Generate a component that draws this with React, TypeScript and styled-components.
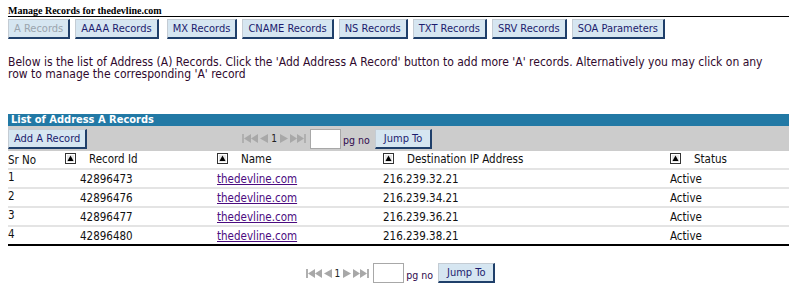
import React from "react";
import styled, { createGlobalStyle } from "styled-components";

const Global = createGlobalStyle`
  html, body { margin: 0; padding: 0; background: #ffffff; }
  body { padding: 8px; font-family: "DejaVu Sans Condensed", "DejaVu Sans", sans-serif; font-stretch: condensed; }
`;

const Page = styled.div`
  width: 781px;
`;

const Title = styled.div`
  font-family: "Liberation Serif", serif;
  font-weight: bold;
  font-size: 10px;
  line-height: 6px;
  height: 8px;
  color: #000;
  border-bottom: 1px solid #000;
`;

const TabBar = styled.div`
  display: flex;
  gap: 5px;
  margin-top: 2px;
`;

const Btn = styled.button<{ $disabled?: boolean; $pad?: number; $shift?: number }>`
  font-family: "DejaVu Sans Condensed", "DejaVu Sans", sans-serif;
  font-stretch: condensed;
  font-size: 11px;
  height: 20px;
  padding: 0 ${(p) => p.$pad ?? 5}px;
  margin: 0 0 0 ${(p) => p.$shift ?? 0}px;
  background: #d6e6f1;
  color: ${(p) => (p.$disabled ? "#9aa4ad" : "#1c1c6e")};
  border-style: solid;
  border-width: 1px 2px 2px 1px;
  border-color: #c4ccd4 #1f3f6a #1f3f6a #c4ccd4;
  cursor: pointer;
  white-space: nowrap;
`;

const Intro = styled.p`
  margin: 17px 12px 0 0;
  font-size: 12px;
  line-height: 12px;
  color: #300a2e;
`;

const ListHead = styled.div`
  margin-top: 34px;
  background: #2279a5;
  color: #fff;
  font-weight: bold;
  font-size: 11px;
  line-height: 12px;
  padding: 0 3px;
`;

const Toolbar = styled.div`
  background: #cccccc;
  height: 25px;
  display: flex;
  align-items: center;
`;

const PagerWrap = styled.div<{ $left: number }>`
  display: flex;
  align-items: center;
  margin-left: ${(p) => p.$left}px;
`;

const Arrows = styled.div`
  display: flex;
  align-items: center;
  gap: 1px;
  font-size: 10px;
  color: #222;
`;

const PageNum = styled.span`
  margin: 0 2px;
`;

const PageInput = styled.input`
  width: 31px;
  height: 20px;
  box-sizing: border-box;
  border: 1px solid #a8a8a8;
  background: #fff;
  margin: 0 2px 0 4px;
  padding: 0;
`;

const PgNo = styled.span`
  font-size: 10.5px;
  color: #300a4e;
  margin: 3px 5px 0 0;
`;

const Table = styled.table`
  width: 100%;
  border-collapse: collapse;
  border-bottom: 2px solid #000;
`;

const Th = styled.th<{ $w?: number }>`
  text-align: left;
  font-weight: normal;
  font-size: 11.5px;
  color: #111;
  height: 17px;
  padding: 0;
  border-bottom: 2px solid #e4e4e4;
  width: ${(p) => (p.$w ? `${p.$w}px` : "auto")};
  vertical-align: middle;
`;

const HeadInner = styled.span`
  display: inline-flex;
  align-items: center;
  gap: 13px;
`;

const Td = styled.td<{ $pad?: number; $up?: boolean }>`
  font-size: 11.5px;
  color: #111;
  height: 17px;
  padding: 0 0 0 ${(p) => p.$pad ?? 0}px;
  border-bottom: 2px solid #e4e4e4;
  vertical-align: ${(p) => (p.$up ? "top" : "middle")};
  line-height: 14px;
`;

const Row = styled.tr`
  &:last-child td { border-bottom: none; }
`;

const Link = styled.a`
  color: #4b0c7f;
  text-decoration: underline;
`;

const BottomPager = styled.div`
  display: flex;
  justify-content: center;
  align-items: center;
  margin-top: 17px;
  padding-left: 4px;
`;

const SortIcon = () => (
  <svg width="11" height="11" viewBox="0 0 11 11">
    <rect x="0.5" y="0.5" width="10" height="10" fill="#d4d4d4" stroke="#333" />
    <rect x="1.5" y="1.5" width="8" height="8" fill="#e8e8e8" stroke="#fff" strokeWidth="1" />
    <path d="M5.5 2.5 L8.5 8 L2.5 8 Z" fill="#000" />
  </svg>
);

const First = () => (
  <svg width="16" height="9" viewBox="0 0 16 9">
    <rect x="0" y="0" width="2" height="9" fill="#b0b0b0" />
    <path d="M9 0 L2 4.5 L9 9 Z" fill="#a8a8a8" />
    <path d="M16 0 L9 4.5 L16 9 Z" fill="#a8a8a8" />
  </svg>
);
const Prev = () => (
  <svg width="9" height="9" viewBox="0 0 9 9">
    <path d="M9 0 L1 4.5 L9 9 Z" fill="#a8a8a8" />
  </svg>
);
const Next = () => (
  <svg width="9" height="9" viewBox="0 0 9 9">
    <path d="M0 0 L8 4.5 L0 9 Z" fill="#a8a8a8" />
  </svg>
);
const Last = () => (
  <svg width="16" height="9" viewBox="0 0 16 9">
    <path d="M0 0 L7 4.5 L0 9 Z" fill="#a8a8a8" />
    <path d="M7 0 L14 4.5 L7 9 Z" fill="#a8a8a8" />
    <rect x="14" y="0" width="2" height="9" fill="#b0b0b0" />
  </svg>
);

const Pager = () => (
  <>
    <Arrows>
      <First />
      <Prev />
      <PageNum>1</PageNum>
      <Next />
      <Last />
    </Arrows>
    <PageInput />
    <PgNo>pg no</PgNo>
    <Btn $pad={8}>Jump To</Btn>
  </>
);

const tabs = [
  "A Records",
  "AAAA Records",
  "MX Records",
  "CNAME Records",
  "NS Records",
  "TXT Records",
  "SRV Records",
  "SOA Parameters",
];

const rows = [
  ["1", "42896473", "216.239.32.21"],
  ["2", "42896476", "216.239.34.21"],
  ["3", "42896477", "216.239.36.21"],
  ["4", "42896480", "216.239.38.21"],
];

export default function App() {
  return (
    <Page>
      <Global />
      <Title>Manage Records for thedevline.com</Title>
      <TabBar>
        {tabs.map((t, i) => (
          <Btn key={t} $disabled={i === 0} $shift={i === 2 ? 3 : 0}>
            {t}
          </Btn>
        ))}
      </TabBar>
      <Intro>
        Below is the list of Address (A) Records. Click the 'Add Address A Record' button to add
        more 'A' records. Alternatively you may click on any row to manage the corresponding 'A'
        record
      </Intro>
      <ListHead>List of Address A Records</ListHead>
      <Toolbar>
        <Btn>Add A Record</Btn>
        <PagerWrap $left={155}>
          <Pager />
        </PagerWrap>
      </Toolbar>
      <Table>
        <thead>
          <tr>
            <Th $w={57}>Sr No</Th>
            <Th $w={152}>
              <HeadInner>
                <SortIcon />
                Record Id
              </HeadInner>
            </Th>
            <Th $w={166}>
              <HeadInner>
                <SortIcon />
                Name
              </HeadInner>
            </Th>
            <Th $w={287}>
              <HeadInner>
                <SortIcon />
                Destination IP Address
              </HeadInner>
            </Th>
            <Th>
              <HeadInner>
                <SortIcon />
                Status
              </HeadInner>
            </Th>
          </tr>
        </thead>
        <tbody>
          {rows.map((r) => (
            <Row key={r[0]}>
              <Td $up>{r[0]}</Td>
              <Td $pad={15}>{r[1]}</Td>
              <Td>
                <Link href="#">thedevline.com</Link>
              </Td>
              <Td>{r[2]}</Td>
              <Td>Active</Td>
            </Row>
          ))}
        </tbody>
      </Table>
      <BottomPager>
        <Pager />
      </BottomPager>
    </Page>
  );
}
